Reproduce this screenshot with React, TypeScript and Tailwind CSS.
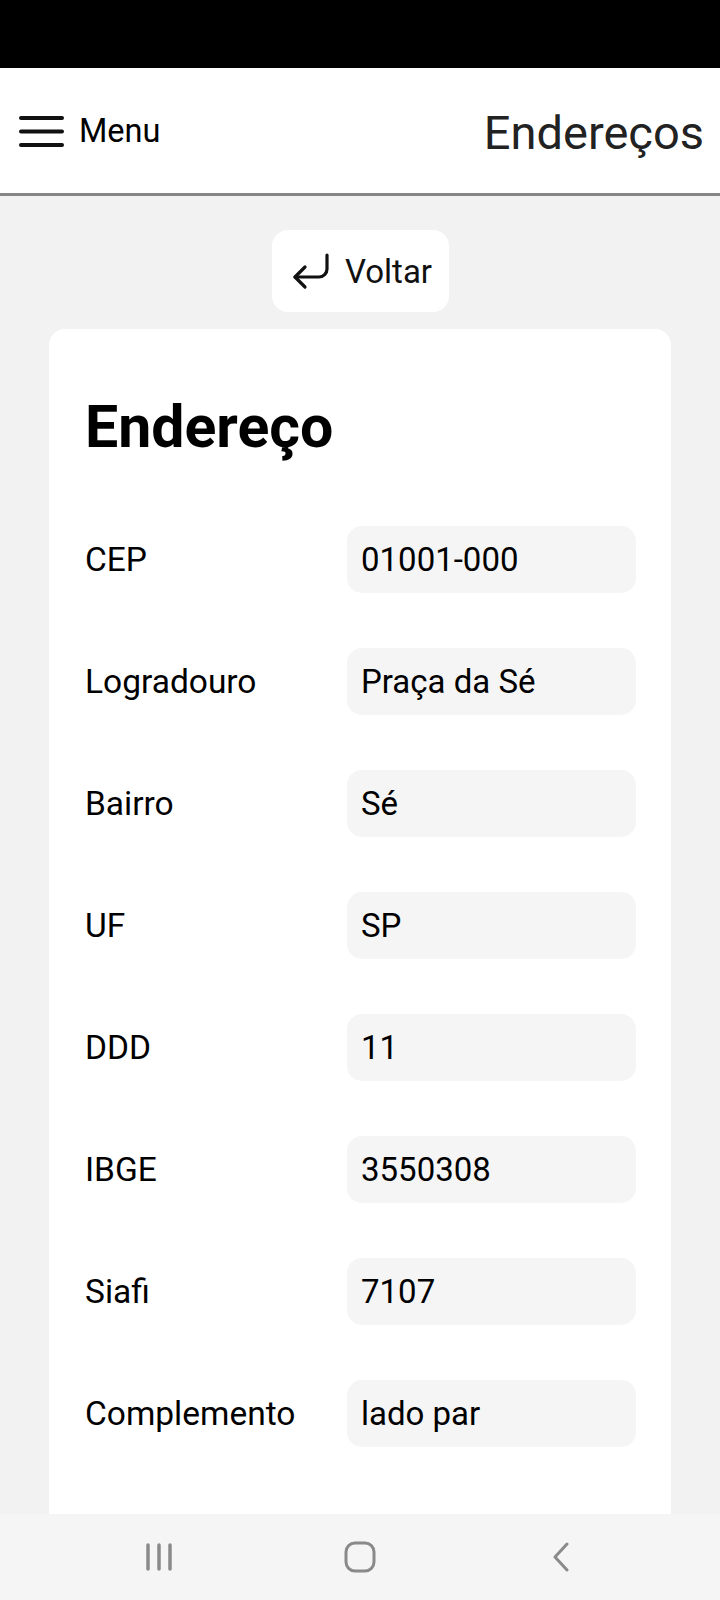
import { CornerDownLeft } from "lucide-react";

const fields = [
  { label: "CEP", value: "01001-000" },
  { label: "Logradouro", value: "Praça da Sé" },
  { label: "Bairro", value: "Sé" },
  { label: "UF", value: "SP" },
  { label: "DDD", value: "11" },
  { label: "IBGE", value: "3550308" },
  { label: "Siafi", value: "7107" },
  { label: "Complemento", value: "lado par" },
];

function MenuIcon() {
  return (
    <svg width="45" height="32" viewBox="0 0 45 32" fill="none" stroke="#111" strokeWidth="4" strokeLinecap="round">
      <line x1="2" y1="3" x2="43" y2="3" />
      <line x1="2" y1="16.5" x2="43" y2="16.5" />
      <line x1="2" y1="30" x2="43" y2="30" />
    </svg>
  );
}

function NavBar() {
  return (
    <nav className="h-[86px] shrink-0 bg-[#f5f5f5]">
      <div className="mx-auto grid h-full w-[603px] grid-cols-3 items-center justify-items-center">
        <svg width="28" height="28" viewBox="0 0 28 28" fill="none" stroke="#8a8a8a" strokeWidth="3.5" strokeLinecap="round">
          <line x1="3" y1="2" x2="3" y2="26" />
          <line x1="14" y1="2" x2="14" y2="26" />
          <line x1="25" y1="2" x2="25" y2="26" />
        </svg>
        <svg width="32" height="32" viewBox="0 0 32 32" fill="none" stroke="#8a8a8a" strokeWidth="3">
          <rect x="2" y="2" width="28" height="28" rx="9" />
        </svg>
        <svg width="20" height="30" viewBox="0 0 20 30" fill="none" stroke="#8a8a8a" strokeWidth="3" strokeLinecap="round" strokeLinejoin="round">
          <polyline points="16,2 4,15 16,28" />
        </svg>
      </div>
    </nav>
  );
}

export default function App() {
  return (
    <div className="flex h-[1600px] w-[720px] flex-col overflow-hidden bg-[#f2f2f2] font-['Roboto',sans-serif] text-black">
      <div className="h-[68px] shrink-0 bg-black" />

      <header className="flex h-[128px] shrink-0 items-center justify-between border-b-[3px] border-[#858585] bg-white pl-[19px] pr-[16px]">
        <div className="flex items-center gap-[15px]">
          <MenuIcon />
          <span className="mt-[2px] text-[32.5px] leading-none">Menu</span>
        </div>
        <h1 className="mt-[3px] text-[47px] leading-none text-[#222]">Endereços</h1>
      </header>

      <main className="flex-1 overflow-hidden">
        <div className="flex justify-center pt-[34px]">
          <button className="flex h-[82px] w-[177px] items-center justify-center gap-[10px] rounded-[16px] bg-white">
            <CornerDownLeft size={48} strokeWidth={1.6} className="-ml-[1px] text-[#111]" />
            <span className="text-[33px] leading-none text-[#111]">Voltar</span>
          </button>
        </div>

        <section className="mx-[49px] mt-[17px] rounded-[16px] bg-white pb-[120px] pl-[36px] pr-[35px] pt-[68px]">
          <h2 className="text-[59px] font-bold leading-none">Endereço</h2>

          <div className="mt-[70px] flex flex-col gap-[55px]">
            {fields.map((field) => (
              <div key={field.label} className="grid grid-cols-[262px_1fr] items-center">
                <span className="text-[33.5px] leading-none">{field.label}</span>
                <div className="flex h-[67px] items-center rounded-[15px] bg-[#f5f5f5] px-[14px] text-[33px] leading-none">
                  {field.value}
                </div>
              </div>
            ))}
          </div>
        </section>
      </main>

      <NavBar />
    </div>
  );
}
